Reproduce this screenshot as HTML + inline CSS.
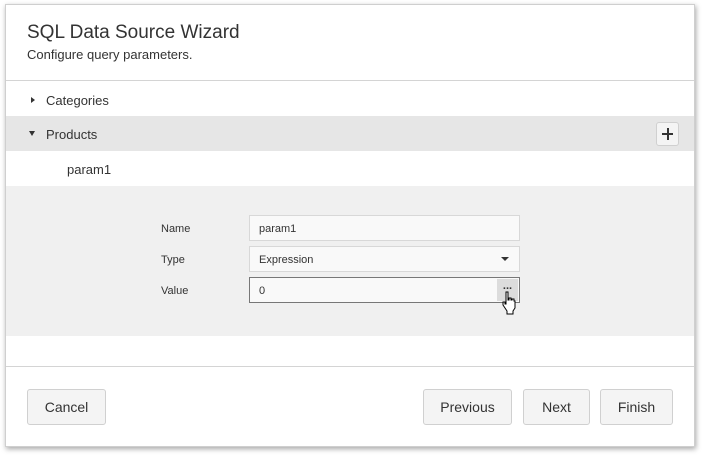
<!DOCTYPE html>
<html><head><style>
*{box-sizing:border-box;margin:0;padding:0}
body{width:706px;height:459px;background:#fff;font-family:"Liberation Sans",sans-serif;position:relative;overflow:hidden}
.dlg{position:absolute;left:5px;top:4px;width:690px;height:443px;background:#fff;border:1px solid #cfcfcf;box-shadow:1px 2px 5px rgba(0,0,0,.35)}
.a{position:absolute}
.t{font-size:13px;color:#333}
.inp{position:absolute;left:243px;width:271px;height:26px;border:1px solid #d8d8d8;background:#f9f9f9;font-size:11px;color:#333;padding:7px 9px}
.btn{position:absolute;top:384px;height:36px;border:1px solid #d0d0d0;border-radius:3px;background:#f4f4f4;font-size:14px;color:#333;text-align:center;line-height:34px}
</style></head><body>
<div class="dlg">
<div class="a" style="left:21px;top:17px;font-size:19px;color:#333">SQL Data Source Wizard</div>
<div class="a t" style="left:21px;top:42px">Configure query parameters.</div>
<div class="a" style="left:0;top:75px;width:688px;height:1px;background:#d4d4d4"></div>
<div class="a" style="left:25px;top:92px;width:0;height:0;border-left:4px solid #333;border-top:3px solid transparent;border-bottom:3px solid transparent"></div>
<div class="a t" style="left:40px;top:88px">Categories</div>
<div class="a" style="left:0;top:111px;width:688px;height:35px;background:#e6e6e6"></div>
<div class="a" style="left:23px;top:126px;width:0;height:0;border-top:5px solid #333;border-left:3px solid transparent;border-right:3px solid transparent"></div>
<div class="a t" style="left:40px;top:122px">Products</div>
<div class="a" style="left:650px;top:117px;width:23px;height:24px;border:1px solid #d0d0d0;border-radius:3px;background:#f4f4f4"><span style="position:absolute;left:5px;top:10px;width:11px;height:2px;background:#333"></span><span style="position:absolute;left:10px;top:5px;width:2px;height:12px;background:#333"></span></div>
<div class="a t" style="left:61px;top:157px">param1</div>
<div class="a" style="left:0;top:181px;width:688px;height:150px;background:#f0f0f0"></div>
<div class="a" style="left:155px;top:218px;font-size:11px;color:#333">Name</div>
<div class="a" style="left:155px;top:249px;font-size:11px;color:#333">Type</div>
<div class="a" style="left:155px;top:280px;font-size:11px;color:#333">Value</div>
<div class="inp" style="top:210px">param1</div>
<div class="inp" style="top:241px">Expression<span style="position:absolute;right:10px;top:10px;border-top:4px solid #333;border-left:4px solid transparent;border-right:4px solid transparent"></span></div>
<div class="inp" style="top:272px;border-color:#777">0<span style="position:absolute;right:1px;top:1px;width:21px;height:22px;background:#dcdcdc;font-size:11px;text-align:center;line-height:14px;font-weight:bold">...</span></div>
<svg class="a" style="left:496px;top:286px" width="14" height="24" viewBox="0 0 14 24"><path d="M4 1h2v8h1v-2h2v2h1v-1h2v2h1v7l-2 3v3H5v-3L1 14v-3h2v2h1z" fill="#fff" stroke="#000" stroke-width="1"/></svg>
<div class="a" style="left:0;top:361px;width:688px;height:1px;background:#d4d4d4"></div>
<div class="btn" style="left:21px;width:79px">Cancel</div>
<div class="btn" style="left:417px;width:89px">Previous</div>
<div class="btn" style="left:517px;width:67px">Next</div>
<div class="btn" style="left:594px;width:73px">Finish</div>
</div>
</body></html>
